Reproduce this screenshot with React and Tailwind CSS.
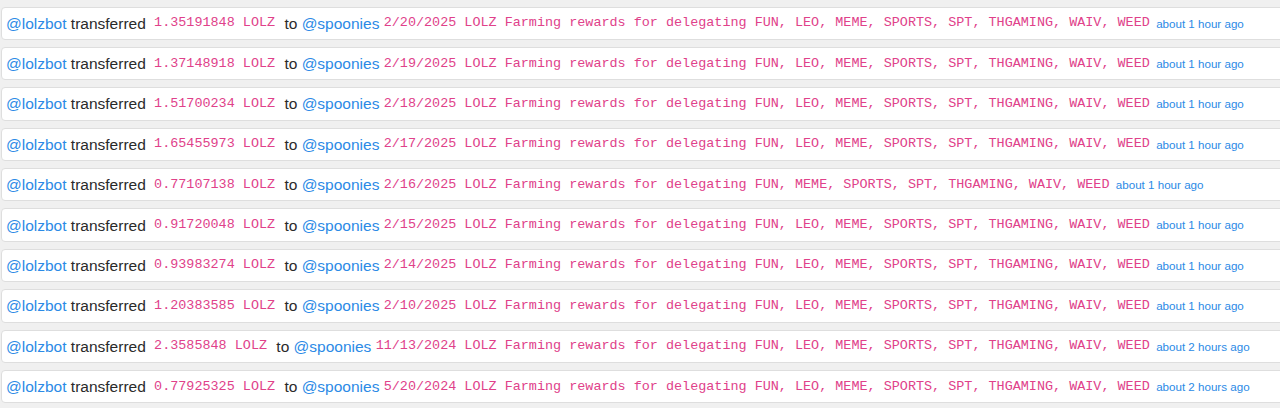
import React from 'react';

const transfers = [
  { amount: '1.35191848', date: '2/20/2025', tokens: 'FUN, LEO, MEME, SPORTS, SPT, THGAMING, WAIV, WEED', ago: 'about 1 hour ago' },
  { amount: '1.37148918', date: '2/19/2025', tokens: 'FUN, LEO, MEME, SPORTS, SPT, THGAMING, WAIV, WEED', ago: 'about 1 hour ago' },
  { amount: '1.51700234', date: '2/18/2025', tokens: 'FUN, LEO, MEME, SPORTS, SPT, THGAMING, WAIV, WEED', ago: 'about 1 hour ago' },
  { amount: '1.65455973', date: '2/17/2025', tokens: 'FUN, LEO, MEME, SPORTS, SPT, THGAMING, WAIV, WEED', ago: 'about 1 hour ago' },
  { amount: '0.77107138', date: '2/16/2025', tokens: 'FUN, MEME, SPORTS, SPT, THGAMING, WAIV, WEED', ago: 'about 1 hour ago' },
  { amount: '0.91720048', date: '2/15/2025', tokens: 'FUN, LEO, MEME, SPORTS, SPT, THGAMING, WAIV, WEED', ago: 'about 1 hour ago' },
  { amount: '0.93983274', date: '2/14/2025', tokens: 'FUN, LEO, MEME, SPORTS, SPT, THGAMING, WAIV, WEED', ago: 'about 1 hour ago' },
  { amount: '1.20383585', date: '2/10/2025', tokens: 'FUN, LEO, MEME, SPORTS, SPT, THGAMING, WAIV, WEED', ago: 'about 1 hour ago' },
  { amount: '2.3585848', date: '11/13/2024', tokens: 'FUN, LEO, MEME, SPORTS, SPT, THGAMING, WAIV, WEED', ago: 'about 2 hours ago' },
  { amount: '0.77925325', date: '5/20/2024', tokens: 'FUN, LEO, MEME, SPORTS, SPT, THGAMING, WAIV, WEED', ago: 'about 2 hours ago' },
];

const mono = "font-['Liberation_Mono',monospace] text-[13.45px] text-[#e0418a]";

const TransferRow = ({ t }) => (
  <div className="h-[33.4px] mb-[7px] -mr-2 flex items-center whitespace-nowrap bg-white border border-[#dedede] rounded-[4px] px-[4px] text-[15.5px] text-[#2a2a2a]">
    <a className="text-[#2b8ae6]">@lolzbot</a>
    <span>&nbsp;transferred&nbsp;</span>
    <code className={`${mono} pl-[4px] pr-[5px]`}>{t.amount} LOLZ</code>
    <span>&nbsp;to&nbsp;</span>
    <a className="text-[#2b8ae6]">@spoonies</a>
    <span>&nbsp;</span>
    <code className={mono}>{t.date} LOLZ Farming rewards for delegating {t.tokens}</code>
    <span>&nbsp;</span>
    <small className="ml-[2px] text-[11.6px] text-[#2b8ae6]">{t.ago}</small>
  </div>
);

export default function App() {
  return (
    <div className="h-[408px] overflow-hidden bg-[#f0f0f0] pt-[6.5px] pl-[1px] font-['Liberation_Sans',Arial,sans-serif]">
      {transfers.map((t) => (
        <TransferRow key={t.date} t={t} />
      ))}
    </div>
  );
}
